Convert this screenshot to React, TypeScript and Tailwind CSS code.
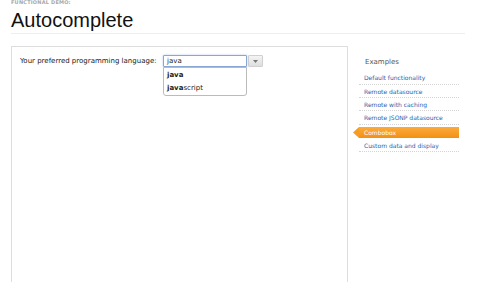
import React from "react";

const links = [
  { label: "Default functionality", h: "h-[13px]" },
  { label: "Remote datasource", h: "h-[12px]" },
  { label: "Remote with caching", h: "h-[12px]" },
  { label: "Remote JSONP datasource", h: "h-[13px]" },
];

export default function App() {
  return (
    <div className="w-[480px] h-[282px] overflow-hidden bg-white font-['DejaVu_Sans',sans-serif]">
      <div className="pl-[11px] pr-[15px]">
        <div className="h-[5px] overflow-hidden">
          <div className="-mt-[1px] text-[5px] leading-[6px] font-bold text-[#a8a8a8] tracking-[0.2px]">
            FUNCTIONAL DEMO:
          </div>
        </div>
        <h1 className="h-[28px] pt-[2px] leading-[26px] text-[20px] text-[#111] font-['Liberation_Sans',sans-serif]">
          Autocomplete
        </h1>
        <div className="h-px bg-[#eeeeee]" />
        <div className="flex mt-[12px]">
          <div className="w-[337px] h-[300px] border border-[#dddddd] pl-[8px] pt-[8px]">
            <div className="flex items-center h-[12px]">
              <span className="text-[7px] text-[#1a1a1a] leading-[12px] w-[143px] whitespace-nowrap">
                Your preferred programming language:
              </span>
              <div className="relative">
                <div className="w-[84px] h-[12px] border border-[#8aa6d6] rounded-[1px] bg-white flex items-center pl-[3px] shadow-[0_0_2px_rgba(90,140,220,0.5)]">
                  <span className="text-[7px] leading-[10px] text-[#222]">java</span>
                </div>
                <div className="absolute left-0 top-[12px] w-[84px] h-[29px] bg-white border border-[#bbbbbb] rounded-b-[3px] z-10 flex flex-col">
                  <div className="h-[14px] flex items-center pl-[3px] text-[7px] text-[#222] font-bold">java</div>
                  <div className="h-[14px] flex items-center pl-[3px] text-[7px] text-[#222]">
                    <span className="font-bold">java</span>script
                  </div>
                </div>
              </div>
              <div className="ml-[1px] w-[15px] h-[12px] border border-[#d0d0d0] rounded-[1px] bg-gradient-to-b from-[#f4f4f4] to-[#dedede] flex items-center justify-center">
                <svg width="5" height="3" viewBox="0 0 5 3">
                  <path d="M0 0 L5 0 L2.5 3 Z" fill="#777" />
                </svg>
              </div>
            </div>
          </div>
          <div className="ml-[11px] w-[100px] flex flex-col">
            <div className="h-[25px] pt-[9px] pl-[6px] leading-[14px] text-[7px] text-[#555]">Examples</div>
            {links.map((l) => (
              <div
                key={l.label}
                className={`${l.h} box-content flex items-center pl-[5px] text-[6px] text-[#2463b0] border-b border-dotted border-[#d4d4d4] whitespace-nowrap`}
              >
                {l.label}
              </div>
            ))}
            <div className="h-[14px] flex items-center">
              <div className="relative h-[11px] w-[100px] bg-gradient-to-b from-[#fbab3c] to-[#f3900f] flex items-center pl-[5px] text-[6px] text-white">
                <svg className="absolute -left-[6px] top-0" width="6" height="11" viewBox="0 0 6 11">
                  <path d="M6 0 L0 5.5 L6 11 Z" fill="#f69c22" />
                </svg>
                Combobox
              </div>
            </div>
            <div className="h-[12px] box-content flex items-center pl-[5px] text-[6px] text-[#2463b0] border-b border-dotted border-[#d4d4d4] whitespace-nowrap">
              Custom data and display
            </div>
          </div>
        </div>
      </div>
    </div>
  );
}
